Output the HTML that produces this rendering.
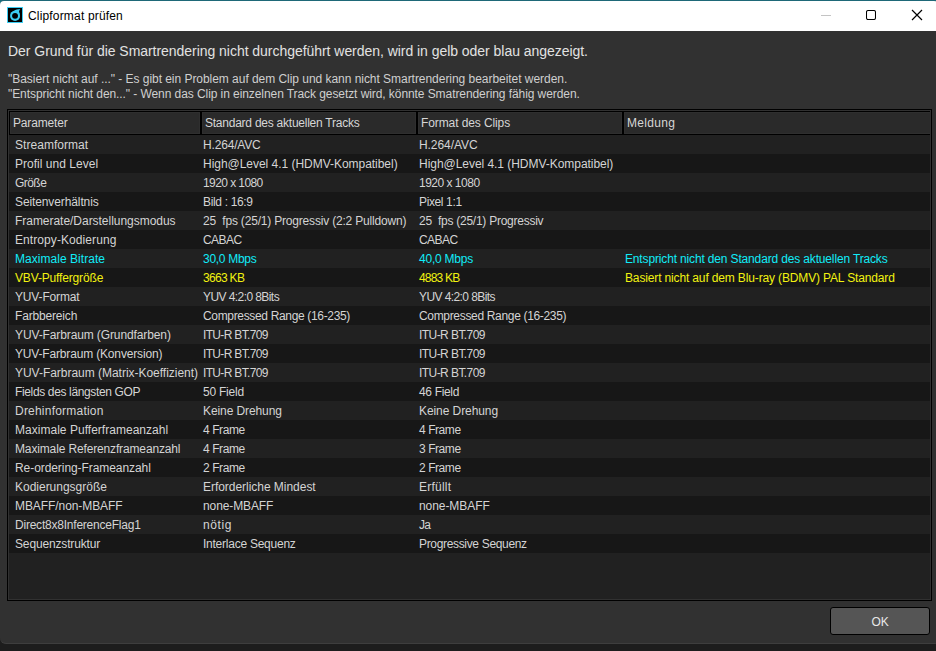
<!DOCTYPE html>
<html><head><meta charset="utf-8">
<style>
*{margin:0;padding:0;box-sizing:border-box}
html,body{width:936px;height:651px;overflow:hidden;background:#1d1d1d}
#desk{left:0;top:0;width:936px;height:12px;background:#147888}
body{position:relative;font-family:"Liberation Sans",sans-serif}
.a{position:absolute;white-space:pre}
#top{left:0;top:0;width:936px;height:1px;background:#1e6878}
#win{left:0;top:1px;width:942px;height:643px;background:#313131;border-bottom:1px solid #3e3e3e;border-radius:4px 8px 8px 6px;overflow:hidden}
#tb{left:0;top:0;width:946px;height:30px;background:#fff}
#title{left:28px;top:0;height:30px;line-height:30px;font-size:12px;color:#000;letter-spacing:0.17px}
#bline{left:0;top:642px;width:946px;height:1px;background:#3d3d3d}
.h1{font-size:14px;color:#e2e2e2;letter-spacing:-0.04px}
.sm{font-size:12px;color:#cfcfcf;letter-spacing:-0.05px}
#frame{left:7px;top:109px;width:925px;height:492px;border:1px solid #000;background:#313131}
.hc{position:absolute;top:112px;height:22px;border:1px solid #2f2f2f}
#inner{left:9px;top:111px;width:921px;height:488px;background:#212121}
#hdr{left:9px;top:111px;width:921px;height:24px;background:#2a2a2a;border:1px solid #000;border-right:none}
.sep{position:absolute;top:112px;width:2px;height:22px;background:#000}
.ht{font-size:12px;color:#d6d6d6;letter-spacing:-0.17px;top:112px;height:22px;line-height:22px}
.row{position:absolute;left:9px;width:921px;height:19px}
.r0{background:#212121}
.r1{background:#171717}
.c{position:absolute;top:1px;height:19px;line-height:19px;font-size:12px;color:#d4d4d4;letter-spacing:-0.17px;white-space:pre}
.c1{left:6px}.c2{left:194px}.c3{left:410px}.c4{left:616px}
.cy .c{color:#10ecf8}
.ye .c{color:#f2f210}
#ok{left:830px;top:607px;width:100px;height:28px;background:#555;border:1px solid #000;border-radius:3px;color:#e8e8e8;font-size:12px;text-align:center;line-height:28px;letter-spacing:-0.2px}
</style></head><body>
<div class="a" id="desk"></div>
<div class="a" id="top"></div>
<div class="a" id="win">
  <div class="a" id="tb"></div>
</div>
<div class="a" id="title" style="top:1px">Clipformat prüfen</div>
<!-- app icon -->
<svg class="a" style="left:7px;top:7px" width="16" height="16" viewBox="0 0 16 16">
  <rect x="0.5" y="0.5" width="15" height="15" fill="#000" stroke="#3ccdf2" stroke-width="1"/>
  <path d="M3.6 7.6 C4.6 4.2 8.4 2.4 13.3 2.0 C12.3 3.2 11.9 4.4 12.1 5.4 L12.9 7.5 Z" fill="#3ccdf2"/>
  <circle cx="8.05" cy="8.9" r="5.0" fill="#3ccdf2"/>
  <circle cx="8.05" cy="8.85" r="2.95" fill="#000"/>
</svg>
<!-- window controls -->
<div class="a" style="left:821px;top:15px;width:10px;height:1px;background:#c4c4c4"></div>
<svg class="a" style="left:866px;top:10px" width="10" height="10" viewBox="0 0 10 10"><rect x="0.5" y="0.5" width="9" height="9" rx="1.6" fill="none" stroke="#000" stroke-width="1.05"/></svg>
<svg class="a" style="left:911px;top:9px" width="12" height="12" viewBox="0 0 12 12">
  <path d="M1 1 L11 11 M11 1 L1 11" stroke="#000" stroke-width="1.2"/>
</svg>

<div class="a h1" style="left:8px;top:43px">Der Grund für die Smartrendering nicht durchgeführt werden, wird in gelb oder blau angezeigt.</div>
<div class="a sm" style="left:8px;top:72px;letter-spacing:-0.04px">"Basiert nicht auf ..." - Es gibt ein Problem auf dem Clip und kann nicht Smartrendering bearbeitet werden.</div>
<div class="a sm" style="left:8px;top:87px;letter-spacing:-0.075px">"Entspricht nicht den..." - Wenn das Clip in einzelnen Track gesetzt wird, könnte Smatrendering fähig werden.</div>

<div class="a" id="frame"></div>
<div class="a" id="inner"></div>
<div class="a" id="hdr"></div>
<div class="hc" style="left:10px;width:190px"></div><div class="hc" style="left:202px;width:214px"></div><div class="hc" style="left:418px;width:204px"></div><div class="hc" style="left:624px;width:306px;border-right:none"></div>
<div class="sep" style="left:200px"></div>
<div class="sep" style="left:416px"></div>
<div class="sep" style="left:622px"></div>
<div class="a ht" style="left:13px">Parameter</div>
<div class="a ht" style="left:205px;letter-spacing:-0.24px">Standard des aktuellen Tracks</div>
<div class="a ht" style="left:421px;letter-spacing:-0.1px">Format des Clips</div>
<div class="a ht" style="left:627px;letter-spacing:0.33px">Meldung</div>

<div id="rows">
<div class="row r0" style="top:135px"><div class="c c1" style="letter-spacing:0.039px">Streamformat</div><div class="c c2" style="letter-spacing:-0.170px">H.264/AVC</div><div class="c c3" style="letter-spacing:-0.070px">H.264/AVC</div></div>
<div class="row r1" style="top:154px"><div class="c c1" style="letter-spacing:0.023px">Profil und Level</div><div class="c c2" style="letter-spacing:-0.031px">High@Level 4.1 (HDMV-Kompatibel)</div><div class="c c3" style="letter-spacing:-0.041px">High@Level 4.1 (HDMV-Kompatibel)</div></div>
<div class="row r0" style="top:173px"><div class="c c1" style="letter-spacing:-0.545px">Größe</div><div class="c c2" style="letter-spacing:-0.580px">1920 x 1080</div><div class="c c3" style="letter-spacing:-0.500px">1920 x 1080</div></div>
<div class="row r1" style="top:192px"><div class="c c1" style="letter-spacing:-0.110px">Seitenverhältnis</div><div class="c c2" style="letter-spacing:-0.340px">Bild : 16:9</div><div class="c c3" style="letter-spacing:-0.370px">Pixel 1:1</div></div>
<div class="row r0" style="top:211px"><div class="c c1" style="letter-spacing:-0.032px">Framerate/Darstellungsmodus</div><div class="c c2" style="letter-spacing:-0.188px">25  fps (25/1) Progressiv (2:2 Pulldown)</div><div class="c c3" style="letter-spacing:-0.257px">25  fps (25/1) Progressiv</div></div>
<div class="row r1" style="top:230px"><div class="c c1" style="letter-spacing:0.080px">Entropy-Kodierung</div><div class="c c2" style="letter-spacing:-0.545px">CABAC</div><div class="c c3" style="letter-spacing:-0.545px">CABAC</div></div>
<div class="row r0 cy" style="top:249px"><div class="c c1" style="letter-spacing:0.043px">Maximale Bitrate</div><div class="c c2" style="letter-spacing:-0.295px">30,0 Mbps</div><div class="c c3" style="letter-spacing:-0.233px">40,0 Mbps</div><div class="c c4" style="letter-spacing:-0.152px">Entspricht nicht den Standard des aktuellen Tracks</div></div>
<div class="row r1 ye" style="top:268px"><div class="c c1" style="letter-spacing:-0.156px">VBV-Puffergröße</div><div class="c c2" style="letter-spacing:-0.687px">3663 KB</div><div class="c c3" style="letter-spacing:-0.800px">4883 KB</div><div class="c c4" style="letter-spacing:-0.145px">Basiert nicht auf dem Blu-ray (BDMV) PAL Standard</div></div>
<div class="row r0" style="top:287px"><div class="c c1" style="letter-spacing:-0.148px">YUV-Format</div><div class="c c2" style="letter-spacing:-0.577px">YUV 4:2:0 8Bits</div><div class="c c3" style="letter-spacing:-0.584px">YUV 4:2:0 8Bits</div></div>
<div class="row r1" style="top:306px"><div class="c c1" style="letter-spacing:-0.170px">Farbbereich</div><div class="c c2" style="letter-spacing:-0.337px">Compressed Range (16-235)</div><div class="c c3" style="letter-spacing:-0.328px">Compressed Range (16-235)</div></div>
<div class="row r0" style="top:325px"><div class="c c1" style="letter-spacing:-0.114px">YUV-Farbraum (Grundfarben)</div><div class="c c2" style="letter-spacing:-0.670px">ITU-R BT.709</div><div class="c c3" style="letter-spacing:-0.561px">ITU-R BT.709</div></div>
<div class="row r1" style="top:344px"><div class="c c1" style="letter-spacing:-0.166px">YUV-Farbraum (Konversion)</div><div class="c c2" style="letter-spacing:-0.670px">ITU-R BT.709</div><div class="c c3" style="letter-spacing:-0.561px">ITU-R BT.709</div></div>
<div class="row r0" style="top:363px"><div class="c c1" style="letter-spacing:-0.026px">YUV-Farbraum (Matrix-Koeffizient)</div><div class="c c2" style="letter-spacing:-0.670px">ITU-R BT.709</div><div class="c c3" style="letter-spacing:-0.561px">ITU-R BT.709</div></div>
<div class="row r1" style="top:382px"><div class="c c1" style="letter-spacing:-0.356px">Fields des längsten GOP</div><div class="c c2" style="letter-spacing:-0.227px">50 Field</div><div class="c c3" style="letter-spacing:-0.341px">46 Field</div></div>
<div class="row r0" style="top:401px"><div class="c c1" style="letter-spacing:0.216px">Drehinformation</div><div class="c c2" style="letter-spacing:-0.095px">Keine Drehung</div><div class="c c3" style="letter-spacing:-0.078px">Keine Drehung</div></div>
<div class="row r1" style="top:420px"><div class="c c1" style="letter-spacing:0.026px">Maximale Pufferframeanzahl</div><div class="c c2" style="letter-spacing:-0.420px">4 Frame</div><div class="c c3" style="letter-spacing:-0.437px">4 Frame</div></div>
<div class="row r0" style="top:439px"><div class="c c1" style="letter-spacing:-0.144px">Maximale Referenzframeanzahl</div><div class="c c2" style="letter-spacing:-0.420px">4 Frame</div><div class="c c3" style="letter-spacing:-0.437px">3 Frame</div></div>
<div class="row r1" style="top:458px"><div class="c c1" style="letter-spacing:-0.070px">Re-ordering-Frameanzahl</div><div class="c c2" style="letter-spacing:-0.420px">2 Frame</div><div class="c c3" style="letter-spacing:-0.437px">2 Frame</div></div>
<div class="row r0" style="top:477px"><div class="c c1" style="letter-spacing:-0.013px">Kodierungsgröße</div><div class="c c2" style="letter-spacing:-0.035px">Erforderliche Mindest</div><div class="c c3" style="letter-spacing:0.230px">Erfüllt</div></div>
<div class="row r1" style="top:496px"><div class="c c1" style="letter-spacing:-0.077px">MBAFF/non-MBAFF</div><div class="c c2" style="letter-spacing:-0.103px">none-MBAFF</div><div class="c c3" style="letter-spacing:-0.070px">none-MBAFF</div></div>
<div class="row r0" style="top:515px"><div class="c c1" style="letter-spacing:-0.220px">Direct8x8InferenceFlag1</div><div class="c c2" style="letter-spacing:0.580px">nötig</div><div class="c c3" style="letter-spacing:-0.800px">Ja</div></div>
<div class="row r1" style="top:534px"><div class="c c1" style="letter-spacing:-0.149px">Sequenzstruktur</div><div class="c c2" style="letter-spacing:-0.245px">Interlace Sequenz</div><div class="c c3" style="letter-spacing:-0.331px">Progressive Sequenz</div></div>
</div>
<div class="a" id="ok">OK</div>
</body></html>
